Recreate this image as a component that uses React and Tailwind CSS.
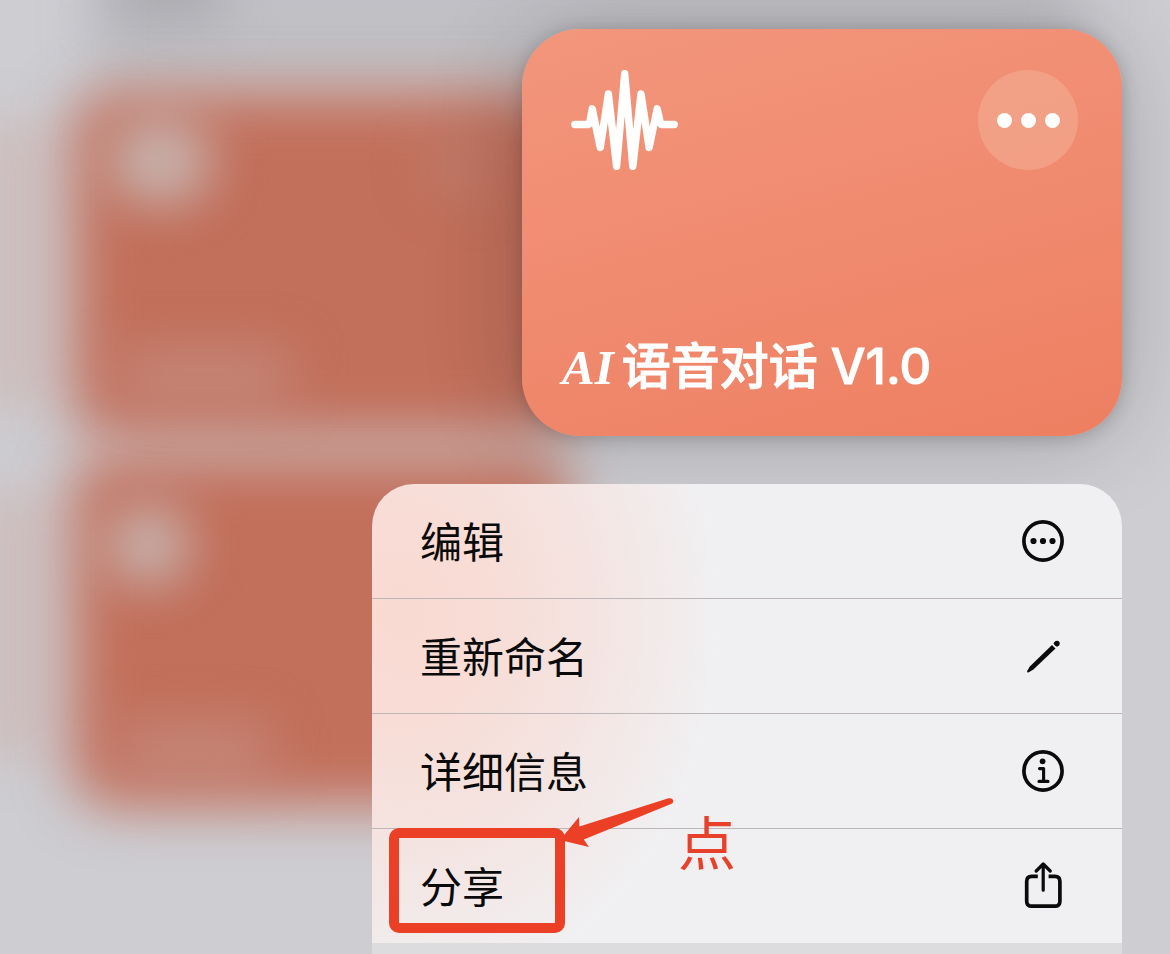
import React from "react";

function EllipsisCircleIcon() {
  return (
    <svg viewBox="0 0 48 48" className="size-12 shrink-0" fill="none" aria-hidden="true">
      <circle cx="24" cy="24" r="19.1" stroke="currentColor" strokeWidth="3.7" />
      <circle cx="14.5" cy="24" r="3.1" fill="currentColor" />
      <circle cx="24" cy="24" r="3.1" fill="currentColor" />
      <circle cx="33.5" cy="24" r="3.1" fill="currentColor" />
    </svg>
  );
}

function PencilIcon() {
  return (
    <svg viewBox="0 0 48 48" className="size-12 shrink-0" fill="currentColor" aria-hidden="true">
      <path d="M8.2 39 L10.8 34.4 L33 12.9 L36.5 16.5 L14.4 37.4 L9.4 40.4 Q7.6 40.8 8.2 39 Z" />
      <circle cx="38" cy="11.4" r="2.7" />
      <path d="M34.4 11.5 L36.2 9.6 L39.8 13.3 L38 15.1 Z" />
    </svg>
  );
}

function InfoIcon() {
  return (
    <svg viewBox="0 0 48 48" className="size-12 shrink-0" fill="none" stroke="currentColor" aria-hidden="true">
      <circle cx="24" cy="24" r="19.1" strokeWidth="3.7" />
      <circle cx="23.6" cy="14.3" r="2.9" fill="currentColor" stroke="none" />
      <path d="M20.5 21.6 H24.6 V34.2 M20 34.4 H29" strokeWidth="3.1" strokeLinecap="round" strokeLinejoin="round" />
    </svg>
  );
}

function ShareIcon() {
  return (
    <svg
      viewBox="0 0 48 48"
      className="size-12 shrink-0"
      fill="none"
      stroke="currentColor"
      strokeWidth="3.7"
      strokeLinejoin="round"
      aria-hidden="true"
    >
      <path d="M18.8 14.4 H12.7 Q7.7 14.4 7.7 19.4 V39.2 Q7.7 44.2 12.7 44.2 H35.9 Q40.9 44.2 40.9 39.2 V19.4 Q40.9 14.4 35.9 14.4 H29.6" />
      <path d="M24.2 2.6 V28.2 M17.2 9 L24.2 2 L31.2 9" strokeWidth="3.2" strokeLinecap="round" />
    </svg>
  );
}

function WaveIcon() {
  return (
    <svg viewBox="562 70 116 100" className="h-[100px] w-[116px]" fill="none" aria-hidden="true">
      <path
        d="M574.8 124.5 H588.3 Q589.4 124.5 589.8 122.4 L592.2 108.8 L600.3 147.4 L608.4 94 L616.6 166.4 L624.7 73.8 L632.8 166.4 L641 94 L649.1 147.4 L657.2 108.8 L660.2 122.4 Q660.7 124.5 662 124.5 H674.2"
        stroke="white"
        strokeWidth="7.4"
        strokeLinecap="round"
        strokeLinejoin="round"
      />
    </svg>
  );
}

const actions = [
  { label: "编辑", Icon: EllipsisCircleIcon },
  { label: "重新命名", Icon: PencilIcon },
  { label: "详细信息", Icon: InfoIcon },
  { label: "分享", Icon: ShareIcon, marked: true },
];

/* Red hand-drawn style callout laid over the share action. */
function Callout() {
  return (
    <>
      <span className="pointer-events-none absolute -top-px left-[17px] h-[105px] w-44 rounded-[10px] border-10 border-[#eb4026]" />
      <svg
        viewBox="556 794 120 56"
        className="pointer-events-none absolute -top-[35px] left-[184px] h-14 w-[120px]"
        fill="#eb4026"
        aria-hidden="true"
      >
        <path d="M560 840 L579 817 L579.4 826.4 L668.5 798.3 Q672.5 797.6 673.3 800.4 Q673.6 802.6 671 804 L583.8 839.6 L589 847 Z" />
      </svg>
      <span className="pointer-events-none absolute -top-[14px] left-[306px] text-[58px] leading-[58px] text-[#e8412b]">
        点
      </span>
    </>
  );
}

function Backdrop() {
  return (
    <div className="absolute inset-0 overflow-hidden bg-[#cdcdd2]" aria-hidden="true">
      <div className="absolute top-[120px] -left-20 h-[290px] w-[130px] bg-[#cdbfbf] blur-[24px]" />
      <div className="absolute top-[490px] -left-20 h-[270px] w-[130px] bg-[#cdbfbf] blur-[24px]" />
      <div className="absolute -top-10 right-[90px] left-[90px] h-[130px] bg-[#bcbcc1]/80 blur-[26px]" />
      <div className="absolute -top-10 left-[110px] h-[60px] w-[110px] bg-[#a2a2a8]/80 blur-[26px]" />
      <div className="absolute top-[92px] left-[72px] h-[346px] w-[498px] rounded-[40px] bg-[#c26f5b] blur-[28px]" />
      <div className="absolute top-[456px] left-[72px] h-[350px] w-[498px] rounded-[40px] bg-[#c26f5b] blur-[28px]" />
      <div className="absolute top-[118px] left-[108px] h-[86px] w-[104px] rounded-full bg-[#c8bab8]/90 blur-[26px]" />
      <div className="absolute top-[504px] left-[106px] h-[82px] w-[84px] rounded-full bg-[#c8bab8]/90 blur-[26px]" />
      <div className="absolute top-[350px] left-[120px] h-[50px] w-[170px] bg-[#c69a8f]/60 blur-[26px]" />
      <div className="absolute top-[724px] left-[120px] h-[50px] w-[150px] bg-[#c69a8f]/60 blur-[26px]" />
      <div className="absolute top-[130px] left-[420px] h-[70px] w-[80px] rounded-full bg-[#bd8474]/50 blur-[24px]" />
    </div>
  );
}

export default function App() {
  return (
    <main className="relative flex min-h-screen flex-col items-end gap-12 overflow-hidden pt-[29px] pr-12 font-['Inter','Noto_Sans_CJK_SC',sans-serif]">
      <Backdrop />

      <article className="relative flex h-[407px] w-full max-w-[600px] flex-col justify-between rounded-[58px] bg-[linear-gradient(165deg,#f2967c_0%,#f08b70_48%,#ee7f61_100%)] pt-[41px] pr-11 pb-10 pl-10 shadow-[0_2px_18px_rgba(0,0,0,0.2),0_4px_100px_rgba(0,0,0,0.2)]">
        <div className="flex items-start justify-between">
          <WaveIcon />
          <button
            type="button"
            aria-label="更多"
            className="flex size-[100px] items-center justify-center gap-[9px] rounded-full bg-[#f3ad92]/60"
          >
            <span className="size-[15px] rounded-full bg-white" />
            <span className="size-[15px] rounded-full bg-white" />
            <span className="size-[15px] rounded-full bg-white" />
          </button>
        </div>
        <h1 className="flex items-baseline gap-2 text-[49px] leading-14 font-medium text-white">
          <span className="font-['Liberation_Serif',serif] font-bold italic">AI</span>
          <span className="[-webkit-text-stroke:1px_white]">语音对话 V1.0</span>
        </h1>
      </article>

      <section className="relative flex w-full max-w-[750px] flex-1 flex-col rounded-t-[42px] bg-[#f0f0f2] bg-[radial-gradient(ellipse_320px_390px_at_30px_130px,#f9dad3_0%,#f8dcd5_25%,#f4e4e1_60%,#f0f0f2_100%)]">
        <ul>
          {actions.map(({ label, Icon, marked }) => (
            <li key={label} className="relative border-b border-[#bcb6b9] last:border-b-0">
              <button
                type="button"
                className="flex h-[114px] w-full items-center justify-between pr-[55px] pl-12 text-[42px] leading-[60px] text-[#0b0b0b]"
              >
                <span className="pt-1">{label}</span>
                <Icon />
              </button>
              {marked && <Callout />}
            </li>
          ))}
        </ul>
        <div className="flex-1 bg-[#dcdcde]" />
      </section>
    </main>
  );
}
